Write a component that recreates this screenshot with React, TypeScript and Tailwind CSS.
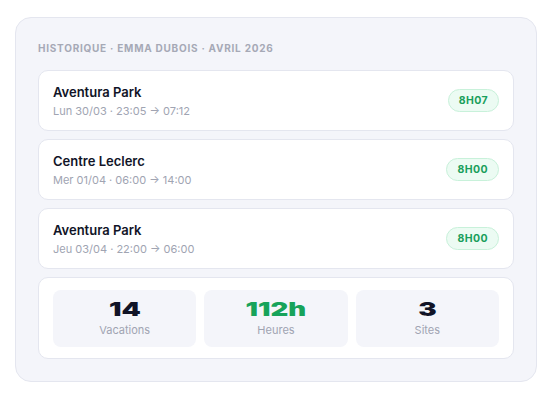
import React from "react";

const rows = [
  { name: "Aventura Park", sub: "Lun 30/03 · 23:05 → 07:12", badge: "8H07" },
  { name: "Centre Leclerc", sub: "Mer 01/04 · 06:00 → 14:00", badge: "8H00" },
  { name: "Aventura Park", sub: "Jeu 03/04 · 22:00 → 06:00", badge: "8H00" },
];

const stats = [
  { value: "14", label: "Vacations", green: false },
  { value: "112h", label: "Heures", green: true },
  { value: "3", label: "Sites", green: false },
];

export default function App() {
  return (
    <div className="w-[554px] h-[400px] bg-white pt-[17px] pl-[15px]" style={{ fontFamily: "Inter, 'Noto Sans', sans-serif" }}>
      <div className="w-[522px] h-[365px] rounded-[16px] border border-[#e4e6ef] bg-[#f4f5fa] px-[22px] pt-[22px]">
        <div className="text-[10px] font-bold tracking-[0.075em] text-[#a6a9b6] leading-[14px] mt-[1px]">
          HISTORIQUE · EMMA DUBOIS · AVRIL 2026
        </div>
        <div className="mt-[15px] flex flex-col gap-[8px]">
          {rows.map((r, i) => (
            <div key={i} className="h-[61px] rounded-[10px] border border-[#e4e6ef] bg-white pl-[14px] pr-[14px] flex items-center justify-between">
              <div className="flex flex-col">
                <div className="text-[13px] font-semibold text-[#111427] leading-[18px]">{r.name}</div>
                <div className="text-[11px] text-[#a0a4b2] leading-[16px] mt-[2px]">{r.sub}</div>
              </div>
              <div className="h-[23px] px-[10px] rounded-full border border-[#c8f1da] bg-[#ecfbf3] text-[10.5px] font-bold tracking-[0.04em] text-[#1a9f5c] flex items-center">
                {r.badge}
              </div>
            </div>
          ))}
          <div className="h-[82px] rounded-[10px] border border-[#e4e6ef] bg-white px-[14px] pt-[12px] grid grid-cols-3 gap-[8px]">
            {stats.map((s, i) => (
              <div key={i} className="h-[57px] rounded-[8px] bg-[#f4f5fa] flex flex-col items-center pt-[9px]">
                <div className={`text-[19px] font-black leading-[22px] scale-x-[1.45] ${s.green ? "text-[#17a35a]" : "text-[#111427]"}`}>
                  {s.value}
                </div>
                <div className="text-[11px] text-[#a0a4b2] leading-[14px] mt-[2px]">{s.label}</div>
              </div>
            ))}
          </div>
        </div>
      </div>
    </div>
  );
}
